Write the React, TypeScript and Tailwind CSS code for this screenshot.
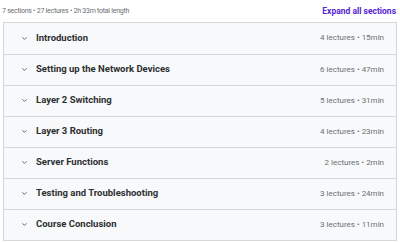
import React from "react";

interface Section {
  title: string;
  lectures: number;
  length: string;
}

const sections: Section[] = [
  { title: "Introduction", lectures: 4, length: "15min" },
  { title: "Setting up the Network Devices", lectures: 6, length: "47min" },
  { title: "Layer 2 Switching", lectures: 5, length: "31min" },
  { title: "Layer 3 Routing", lectures: 4, length: "23min" },
  { title: "Server Functions", lectures: 2, length: "2min" },
  { title: "Testing and Troubleshooting", lectures: 3, length: "24min" },
  { title: "Course Conclusion", lectures: 3, length: "11min" },
];

const Chevron = () => (
  <svg className="w-[7px] h-[7px] text-[#2d2f31]" viewBox="0 0 24 24" fill="none" stroke="currentColor" strokeWidth="2.5" strokeLinecap="round" strokeLinejoin="round">
    <path d="M6 9l6 6 6-6" />
  </svg>
);

export default function App() {
  return (
    <div className="w-[400px] h-[243px] bg-white overflow-hidden font-['Roboto',sans-serif]">
      <div className="flex items-center justify-between pl-[2px] pr-[4px] h-[22px]">
        <span className="text-[7px] tracking-[-0.25px] text-[#6a6f73]">7 sections • 27 lectures • 2h 33m total length</span>
        <span className="text-[8.5px] font-bold text-[#5624d0]">Expand all sections</span>
      </div>
      <div className="mx-[3px] border border-[#d1d7dc]">
        {sections.map((s, i) => (
          <div
            key={s.title}
            className={`flex items-center justify-between h-[31px] bg-[#f7f9fa] pl-[17px] pr-[12px] ${i > 0 ? "border-t border-[#d1d7dc]" : ""}`}
          >
            <div className="flex items-center gap-[8px] -mt-[1px]">
              <Chevron />
              <span className="text-[9.5px] font-bold text-[#2d2f31]">{s.title}</span>
            </div>
            <span className="text-[8px] text-[#6a6f73] -mt-[1px]">
              {s.lectures} lectures • {s.length}
            </span>
          </div>
        ))}
      </div>
    </div>
  );
}
